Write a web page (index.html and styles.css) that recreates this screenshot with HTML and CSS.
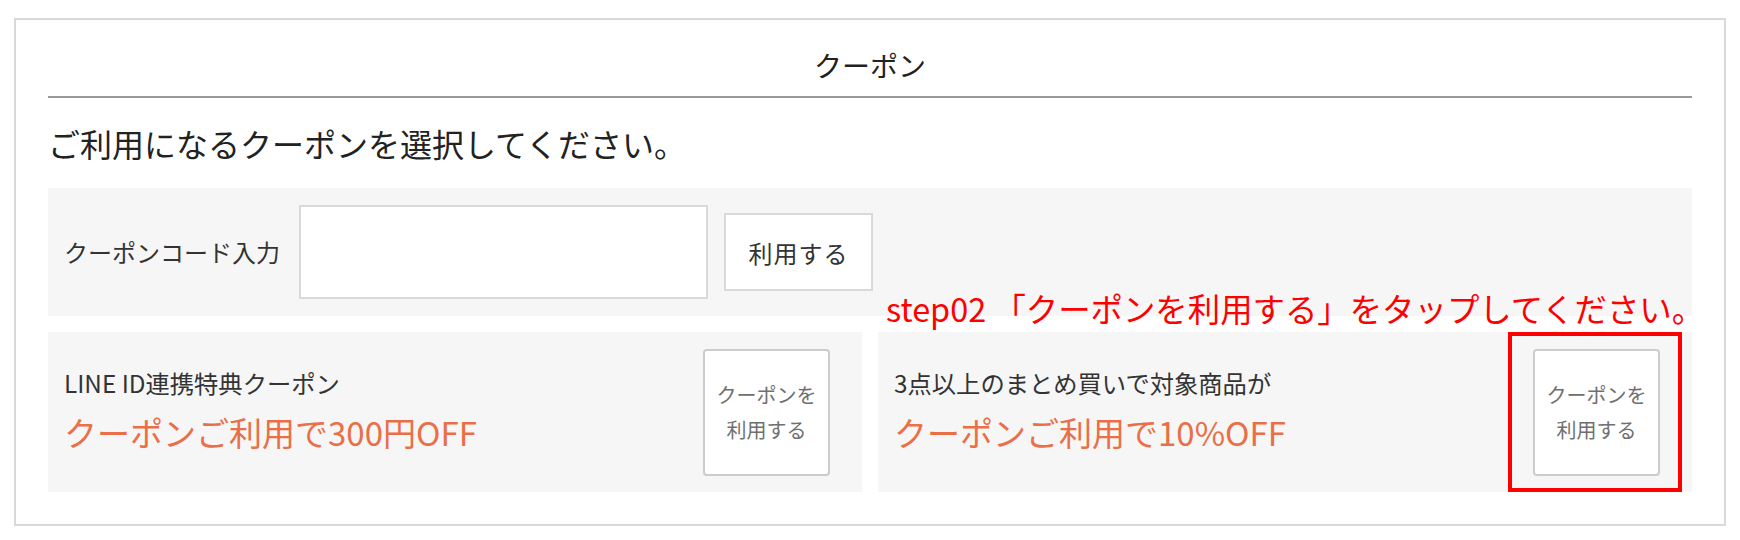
FILE: index.html
```html
<!DOCTYPE html>
<html lang="ja">
<head>
<meta charset="utf-8">
<title>クーポン</title>
<link rel="stylesheet" href="styles.css">
</head>
<body>
<div class="box">
  <h2 class="heading">クーポン</h2>
  <p class="lead">ご利用になるクーポンを選択してください。</p>
  <div class="code-row">
    <span class="code-label">クーポンコード入力</span>
    <input class="code-input" type="text">
    <button class="code-btn" type="button">利用する</button>
  </div>
  <div class="cards">
    <div class="card">
      <div class="card-text">
        <div class="card-name">LINE ID連携特典クーポン</div>
        <div class="card-offer">クーポンご利用で300円OFF</div>
      </div>
      <button class="use-btn" type="button">クーポンを<br>利用する</button>
    </div>
    <div class="card">
      <div class="card-text">
        <div class="card-name">3点以上のまとめ買いで対象商品が</div>
        <div class="card-offer">クーポンご利用で10%OFF</div>
      </div>
      <button class="use-btn" type="button">クーポンを<br>利用する</button>
    </div>
  </div>
  <div class="note">step02 「クーポンを利用する」をタップしてください。</div>
  <div class="highlight"></div>
</div>
</body>
</html>
```
FILE: styles.css
```css
* { box-sizing: border-box; }
html, body { margin: 0; padding: 0; background: #fff; }
body {
  font-family: "Noto Sans CJK JP", "Noto Sans", sans-serif;
  color: #222;
}
.box {
  position: relative;
  margin: 18px 0 0 14px;
  width: 1712px;
  border: 2px solid #d9d9d9;
  padding: 0 32px 32px;
}
.heading {
  margin: 0;
  padding: 24px 0 10px;
  font-size: 28px;
  line-height: 42px;
  font-weight: normal;
  text-align: center;
  color: #222;
  border-bottom: 2px solid #999;
}
.lead {
  margin: 21px 0;
  font-size: 32px;
  line-height: 48px;
  color: #222;
}
.code-row {
  display: flex;
  align-items: center;
  background: #f6f6f6;
  padding: 17px 16px;
}
.code-label {
  font-size: 24px;
  line-height: 36px;
  color: #333;
  margin-right: 19px;
}
.code-input {
  width: 409px;
  height: 94px;
  border: 2px solid #d9d9d9;
  background: #fff;
  margin: 0;
  padding: 0 10px;
  font-size: 24px;
  outline: none;
}
.code-btn {
  margin: 0 0 0 16px;
  width: 149px;
  height: 78px;
  border: 2px solid #d9d9d9;
  background: #fff;
  font-family: "Noto Sans CJK JP", "Noto Sans", sans-serif;
  font-size: 24px;
  letter-spacing: 1px;
  color: #333;
  padding: 0;
}
.cards {
  margin-top: 16px;
  display: grid;
  grid-template-columns: 1fr 1fr;
  gap: 16px;
}
.card {
  height: 160px;
  background: #f6f6f6;
  display: flex;
  align-items: center;
  justify-content: space-between;
  padding: 0 32px 0 16px;
}
.card-name {
  font-size: 24.3px;
  line-height: 40px;
  color: #333;
}
.card-offer {
  font-size: 33px;
  line-height: 58px;
  color: #ea6f47;
}
.use-btn {
  width: 127px;
  height: 127px;
  border: 2px solid #cccccc;
  border-radius: 4px;
  background: #fff;
  padding: 0;
  font-family: "Noto Sans CJK JP", "Noto Sans", sans-serif;
  font-size: 20px;
  line-height: 35px;
  color: #6f6f6f;
}
.note {
  position: absolute;
  left: 870px;
  top: 268px;
  font-size: 32.4px;
  line-height: 40px;
  color: #ff0000;
  white-space: nowrap;
}
.highlight {
  position: absolute;
  left: 1492px;
  top: 312px;
  width: 174px;
  height: 160px;
  border: 4px solid #ff0000;
}
```
